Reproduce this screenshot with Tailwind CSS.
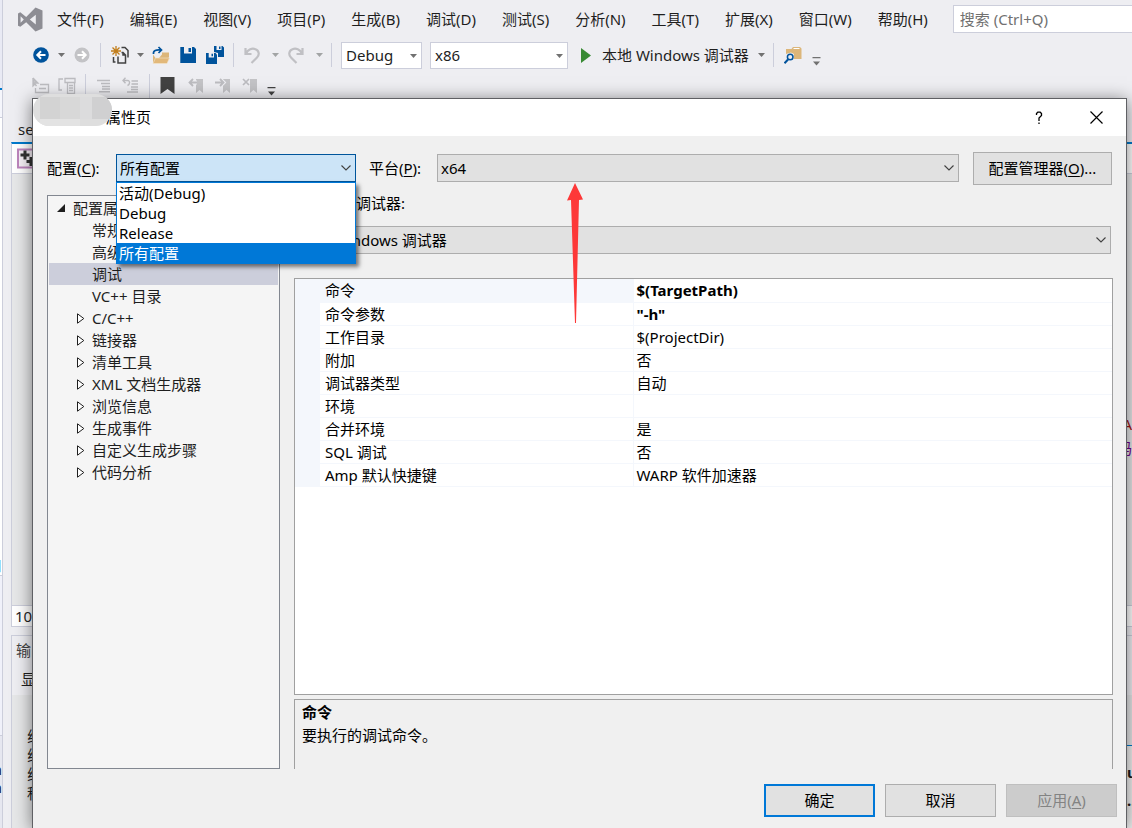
<!DOCTYPE html>
<html lang="zh-CN">
<head>
<meta charset="utf-8">
<title>属性页</title>
<script src="https://cdn.jsdelivr.net/npm/@tailwindcss/browser@4"></script>
</head>
<body class="relative flex h-screen overflow-hidden bg-[#eeeef2] font-['Noto_Sans','Noto_Sans_CJK_SC',sans-serif] text-[15px] leading-5 text-[#1e1e1e]">

<svg class="hidden" aria-hidden="true">
  <symbol id="caret" viewBox="0 0 7 4"><path d="M0 0h7L3.5 4z" fill="currentColor"/></symbol>
  <symbol id="chev" viewBox="0 0 10 6"><path d="M.5.5 5 5 9.500.5" fill="none" stroke="currentColor" stroke-width="1.1"/></symbol>
  <symbol id="more" viewBox="0 0 9 9"><path d="M.5 0h8v1.200h-8zM1 4.500h7L4.500 8.500z" fill="currentColor"/></symbol>
  <symbol id="closed" viewBox="0 0 8 11"><path d="M.5.8v9.400L6.800 5.500z" fill="#fff" stroke="#1e1e1e"/></symbol>
  <pattern id="dots" width="4" height="4" patternUnits="userSpaceOnUse"><path d="M0 0h1v1H0zM2 2h1v1H2z" fill="#999"/></pattern>
  <symbol id="mark" viewBox="0 0 16 16"><path d="M8 1h7v14l-3.500-3L8 15z" fill="#c3c3c6"/></symbol>
</svg>

<!-- Edge of the window behind -->
<div class="flex w-[3px] shrink-0 flex-col overflow-hidden border-r border-[#cccedb] bg-[#f5f6fc]">
  <div class="h-[88px] shrink-0 bg-[#e9eaf4]"></div>
  <div class="h-[2px] shrink-0 bg-[#007acc]"></div>
  <div class="h-[28px] shrink-0 border-b border-[#cccedb] bg-[#f5f6fc]"></div>
  <div class="flex h-[457px] shrink-0 flex-col justify-end bg-white"><span class="flex justify-end text-blue-600">口</span></div>
  <div class="h-[161px] shrink-0 border-y border-[#cccedb] bg-[#f0f1fa]"></div>
  <div class="flex grow flex-col items-end bg-[#e6e7f0] pt-6 leading-[18px]"><span>m</span><span>m</span></div>
</div>

<main class="flex min-w-0 grow flex-col">
  <nav class="flex h-[38px] shrink-0 items-center pl-[15px]" aria-label="主菜单">
    <svg class="mr-[14px] size-[25px] shrink-0" viewBox="0 0 25 25" fill="#8d8d94"><path fill-rule="evenodd" d="M0 6.500 2.300 5.300 8.200 10 17.500.5 24.500 3.500v18L17.500 24.500 8.200 15.200 2.300 19.800 0 18.700zM2.600 9.300v6.500L5.800 12.600zM11.800 12.600 17.800 17.400V7.800z"/></svg>
    <div class="flex shrink-0 gap-[26px]">
      <button>文件(F)</button><button>编辑(E)</button><button>视图(V)</button><button>项目(P)</button><button>生成(B)</button><button>调试(D)</button><button>测试(S)</button><button>分析(N)</button><button>工具(T)</button><button>扩展(X)</button><button>窗口(W)</button><button>帮助(H)</button>
    </div>
    <input type="search" aria-label="搜索" placeholder="搜索 (Ctrl+Q)" class="ml-[25px] h-7 min-w-0 grow border border-r-0 border-[#cccedb] bg-white pl-[6px] outline-none placeholder:text-[#717171]">
  </nav>

  <div class="flex h-[34px] shrink-0 items-center pl-[14px]" role="toolbar" aria-label="标准">
    <svg class="h-[22px] w-[7px]"><rect width="7" height="22" fill="url(#dots)"/></svg>
    <button class="ml-[9px]" aria-label="后退"><svg class="size-4" viewBox="0 0 16 16"><circle cx="8" cy="8" r="7.800" fill="#00539c"/><path d="M12.500 8H4.500M8 4.200 4.300 8 8 11.800" fill="none" stroke="#fff" stroke-width="2"/></svg></button>
    <button class="ml-[9px]" aria-label="后退列表"><svg class="h-1 w-[7px] text-[#717171]"><use href="#caret"/></svg></button>
    <button class="ml-[9px]" aria-label="前进"><svg class="size-4" viewBox="0 0 16 16"><circle cx="8" cy="8" r="7.500" fill="#c3c3c6"/><path d="M3.500 8h8M8 4.200 11.700 8 8 11.800" fill="none" stroke="#fff" stroke-width="2"/></svg></button>
    <span class="ml-[10px] h-6 w-px bg-[#cccedb]"></span>
    <button class="ml-[10px]" aria-label="新建项目"><svg class="size-[18px]" viewBox="0 0 18 18" fill="none"><path d="M5 0v10M0 5h10M1.500 1.500l7 7M8.500 1.500l-7 7" stroke="#c27d1a" stroke-width="1.300"/><path d="M10.500 1.500h3.500l3 3v7M2.500 11v5h2" stroke="#424242" stroke-width="1.500"/><path d="M7 10.500V17h7.500V9l-2.500-2.500h-1.500M12 6.500V9h2.500" stroke="#424242" stroke-width="1.500"/></svg></button>
    <button class="ml-[8px]" aria-label="新建列表"><svg class="h-1 w-[7px] text-[#717171]"><use href="#caret"/></svg></button>
    <button class="ml-[8px]" aria-label="打开文件"><svg class="size-[18px]" viewBox="0 0 18 18"><path d="M1 8.500V17h13.500L17 11V6.500h-7V8.500L7 12H3.500z" fill="#dcb67a"/><path d="M3.500 12h14L15 17.500H1z" fill="#e2b87a" stroke="#f3e5cf" stroke-width=".6"/><path d="M1.500 8C1 4.500 4 3.500 9 4M6.500 1 9.500 4l-3 3" fill="none" stroke="#00539c" stroke-width="1.700"/></svg></button>
    <button class="ml-[10px]" aria-label="保存"><svg class="size-4" viewBox="0 0 16 16"><path d="M.3 0h13.700l2 2v14H.3z" fill="#00539c"/><path d="M4 0h8v6.500H4z" fill="#eeeef2"/><path d="M8.500 1H11v4H8.500z" fill="#00539c"/></svg></button>
    <button class="ml-[10px]" aria-label="全部保存"><svg class="size-[18px]" viewBox="0 0 18 18"><path d="M8 0h8.500L18 1.500V11H12V7L8 6z" fill="#00539c"/><path d="M10.500 0h5v4h-5z" fill="#eeeef2"/><path d="M13 .5h1.500v2.500H13z" fill="#00539c"/><path d="M0 7h9.500L11 8.500V18H0z" fill="#00539c"/><path d="M2.700 7h5.300v4.500H2.700z" fill="#eeeef2"/><path d="M5.500 7.700H7v2.600H5.500z" fill="#00539c"/></svg></button>
    <span class="ml-[9px] h-6 w-px bg-[#cccedb]"></span>
    <button class="ml-[10px]" aria-label="撤消"><svg class="size-[17px]" viewBox="0 0 17 17"><path d="M1.500 1v6h6M2 6.500C4 2.500 8 .8 11.500 2.200c4 1.600 4 5.800 1.500 8.300L7.500 16" fill="none" stroke="#c0c0c4" stroke-width="2.200"/></svg></button>
    <button class="ml-[11px]" aria-label="撤消列表"><svg class="h-1 w-[7px] text-[#a2a4a5]"><use href="#caret"/></svg></button>
    <button class="ml-[8px]" aria-label="恢复"><svg class="size-[17px]" viewBox="0 0 17 17"><path d="M15.500 1v6h-6M15 6.500C13 2.500 9 .8 5.500 2.200c-4 1.600-4 5.800-1.500 8.300L9.500 16" fill="none" stroke="#c0c0c4" stroke-width="2.200"/></svg></button>
    <button class="ml-[12px]" aria-label="恢复列表"><svg class="h-1 w-[7px] text-[#a2a4a5]"><use href="#caret"/></svg></button>
    <span class="ml-[8px] h-6 w-px bg-[#cccedb]"></span>
    <div class="relative ml-[9px]"><select aria-label="解决方案配置" class="h-[27px] w-[81px] appearance-none border border-[#cccedb] bg-white pl-1"><option>Debug</option></select><svg class="pointer-events-none absolute top-3 right-[5px] h-1 w-[7px] text-[#717171]"><use href="#caret"/></svg></div>
    <div class="relative ml-2"><select aria-label="解决方案平台" class="h-[27px] w-[138px] appearance-none border border-[#cccedb] bg-white pl-1"><option>x86</option></select><svg class="pointer-events-none absolute top-3 right-[5px] h-1 w-[7px] text-[#717171]"><use href="#caret"/></svg></div>
    <button class="ml-[13px] flex shrink-0 items-center"><svg class="mr-[11px] h-[15px] w-[10px]" viewBox="0 0 10 15"><path d="M0 0v15l10-7.500z" fill="#388a34"/></svg>本地 Windows 调试器<svg class="ml-[9px] h-1 w-[7px] text-[#717171]"><use href="#caret"/></svg></button>
    <span class="ml-[8px] h-6 w-px bg-[#cccedb]"></span>
    <button class="ml-[10px]" aria-label="在文件中查找"><svg class="size-[18px]" viewBox="0 0 18 18"><path d="M2 3h5.500L9 1h7l1.500 1.500V13H10V8L7 6.500 2 8z" fill="#dcb67a"/><path d="M9.500 2.500h6" stroke="#fff"/><circle cx="6.200" cy="11" r="2.800" fill="#eeeef2" stroke="#00539c" stroke-width="1.500"/><path d="m4 13.500-3.500 3.800" stroke="#00539c" stroke-width="2"/></svg></button>
    <button class="mt-3 ml-[10px]" aria-label="工具栏选项"><svg class="size-[9px] text-[#717171]"><use href="#more"/></svg></button>
  </div>

  <div class="flex h-[27px] shrink-0 items-center pl-[14px]" role="toolbar" aria-label="文本编辑器">
    <svg class="h-[19px] w-[7px]"><rect width="7" height="19" fill="url(#dots)"/></svg>
    <button class="ml-[8px]" aria-label="成员列表"><svg class="size-[18px]" viewBox="0 0 18 18" fill="none" stroke="#bcbcc0" stroke-width="1.300"><path d="M1 1v8l2-2 1.500 2" fill="#bcbcc0"/><path d="M1 1l5 5H3" fill="#bcbcc0"/><path d="M8 7.500h8.500v8h-13V11M7 11.500h7"/></svg></button>
    <button class="ml-[8px]" aria-label="参数信息"><svg class="size-[18px]" viewBox="0 0 18 18" fill="none" stroke="#bcbcc0" stroke-width="1.300"><path d="M5 2H1v11h3M7 1.500h10v4H7zM9.500 5.500v11h7v-11M11 8.500h4M11 11h4M11 13.500h4"/></svg></button>
    <span class="ml-[9px] h-6 w-px bg-[#cccedb]"></span>
    <button class="ml-[11px]" aria-label="注释选中行"><svg class="size-[15px]" viewBox="0 0 15 15" fill="none" stroke="#bcbcc0" stroke-width="1.400"><path d="M0 2.500h13M4 5.500h9M5 8.500h8M5 11h8M2 13.700h11"/></svg></button>
    <button class="ml-[10px]" aria-label="取消注释选中行"><svg class="size-[17px]" viewBox="0 0 17 17" fill="none" stroke="#bcbcc0" stroke-width="1.400"><path d="M3.500.8 1 3.500l2.500 2.700M1 3.500h4.500c3 0 2.500 4 0 5M9.500 4H16M9.500 7H16M9 10h7M9 12.500h7M5 15h11"/></svg></button>
    <span class="ml-[10px] h-6 w-px bg-[#cccedb]"></span>
    <button class="ml-[10px]" aria-label="切换书签"><svg class="h-[17px] w-[15px]" viewBox="0 0 15 17"><path d="M.5 0h14v17l-7-5-7 5z" fill="#424242"/></svg></button>
    <button class="ml-[13px]" aria-label="上一书签"><svg class="size-4" viewBox="0 0 16 16"><use href="#mark"/><path d="M9 4.500H2M5 1 1.500 4.500 5 8" fill="none" stroke="#eeeef2" stroke-width="4"/><path d="M9 4.500H2M5 1 1.500 4.500 5 8" fill="none" stroke="#bcbcc0" stroke-width="1.800"/></svg></button>
    <button class="ml-[11px]" aria-label="下一书签"><svg class="size-4" viewBox="0 0 16 16"><use href="#mark"/><path d="M0 4.500h7M5 1l3.500 3.500L5 8" fill="none" stroke="#eeeef2" stroke-width="4"/><path d="M0 4.500h7M5 1l3.500 3.500L5 8" fill="none" stroke="#bcbcc0" stroke-width="1.800"/></svg></button>
    <button class="ml-[11px]" aria-label="清除书签"><svg class="size-4" viewBox="0 0 16 16"><use href="#mark"/><path d="m1 1 6 6M7 1 1 7" stroke="#bcbcc0" stroke-width="1.700"/></svg></button>
    <button class="mt-3 ml-[9px]" aria-label="工具栏选项"><svg class="size-[9px] text-[#424242]"><use href="#more"/></svg></button>
  </div>

  <section class="ml-2 flex min-h-0 grow flex-col pt-5" aria-label="编辑器">
    <div class="h-[23px] shrink-0 pl-[7px]">server.cpp</div>
    <div class="flex h-[32px] shrink-0 items-center border-t-2 border-b border-l border-t-[#007acc] border-b-[#cccedb] border-l-[#cccedb] bg-white pl-[5px]">
      <svg class="size-[22px]" viewBox="0 0 22 22"><path d="M1 1.500h20v18H1z" fill="#f6f0f6" stroke="#bd85bd" stroke-width="2"/><path d="M8 2.500v9M3.500 7h9M14 9v9M9.500 13.500h9" stroke="#333" stroke-width="3"/></svg>
    </div>
    <div class="flex h-[431px] shrink-0 flex-col items-end justify-center overflow-hidden border-l border-[#cccedb] bg-[#e6e7e8] pt-[92px] leading-6">
      <span class="text-[#a31515]">TA</span><span class="text-[#6f008a]">吗</span>
    </div>
    <div class="h-[22px] shrink-0 border border-r-0 border-[#cccedb] bg-white pl-[3px]">100 %</div>
    <div class="mt-2 flex h-[60px] shrink-0 flex-col gap-[9px] border-t border-l border-[#cccedb] pt-1 pl-1">
      <span class="text-[#444]">输出</span><span class="pl-[5px]">显示</span>
    </div>
    <div class="flex min-h-0 grow justify-between overflow-hidden border-l border-[#cccedb] bg-[#e6e7e8]">
      <div class="pt-8 pl-[15px] leading-[19px]">线程<br>线程<br>线程<br>程序</div>
      <div class="mt-[50px] w-[5px] border-t border-[#007acc] bg-[#f0f0f0] pt-3 leading-7 font-bold">u<br>..</div>
    </div>
  </section>
</main>

<!-- Property pages dialog -->
<div role="dialog" aria-labelledby="dialog-title" class="absolute top-[98px] right-[5px] bottom-0 left-8 flex flex-col border border-b-0 border-[#5f6064] bg-[#f0f0f0] text-black shadow-[0_2px_16px_rgba(0,0,0,0.5)]">
  <header class="flex h-[37px] shrink-0 items-center bg-white pr-[23px]">
    <h1 id="dialog-title" class="pb-[2px] pl-[73px]">属性页</h1>
    <button class="ml-auto" aria-label="帮助"><svg class="h-[14px] w-2" viewBox="0 0 8 14"><path d="M1.500 4V2.500L2.800 1.200h2.400l1.300 1.300v2L4 7v3M4 11.500V13" fill="none" stroke="#000" stroke-width="1.300"/></svg></button>
    <button class="ml-[47px]" aria-label="关闭"><svg class="size-[13px]" viewBox="0 0 13 13"><path d="m.5.5 12 12M12.500.5l-12 12" stroke="#000" stroke-width="1.200"/></svg></button>
  </header>

  <div class="mt-4 flex h-8 shrink-0 items-center px-[14px]">
    <label for="config" class="w-[69px] shrink-0">配置(<u class="underline-offset-2">C</u>):</label>
    <div class="relative w-[240px] shrink-0">
      <select id="config" class="block h-7 w-full appearance-none border border-[#00559b] bg-[#cce4f7] pl-[3px]"><option>所有配置</option><option>活动(Debug)</option><option>Debug</option><option>Release</option></select>
      <svg class="pointer-events-none absolute top-[11px] right-[5px] h-[6px] w-[10px] text-[#404040]"><use href="#chev"/></svg>
      <ul role="listbox" aria-label="配置" class="absolute top-7 left-0 z-10 w-full border border-[#0078d7] bg-white shadow-[3px_3px_4px_rgba(0,0,0,0.5)]">
        <li role="option" class="h-5 pl-[2px]">活动(Debug)</li>
        <li role="option" class="h-5 pl-[2px]">Debug</li>
        <li role="option" class="h-5 pl-[2px]">Release</li>
        <li role="option" aria-selected="true" class="h-5 bg-[#0078d7] pl-[2px] text-white">所有配置</li>
      </ul>
    </div>
    <label for="platform" class="ml-[13px] w-[68px] shrink-0">平台(<u class="underline-offset-2">P</u>):</label>
    <div class="relative grow">
      <select id="platform" class="block h-7 w-full appearance-none border border-[#adadad] bg-[#e1e1e1] pl-[3px]"><option>x64</option></select>
      <svg class="pointer-events-none absolute top-[11px] right-[5px] h-[6px] w-[10px] text-[#404040]"><use href="#chev"/></svg>
    </div>
    <button class="ml-[14px] h-[33px] w-[139px] shrink-0 self-start border border-[#adadad] bg-[#e1e1e1] pb-[2px]">配置管理器(<u class="underline-offset-2">O</u>)...</button>
  </div>

  <div class="mt-[11px] flex h-[574px] shrink-0 pr-[13px] pl-[14px]">
    <ul role="tree" aria-label="配置属性" class="w-[233px] shrink-0 border border-[#828790] bg-[#f5f5f5] p-px leading-[22px] text-[#1e1e1e]">
      <li role="treeitem" aria-expanded="true">
        <div class="flex h-[22px] items-center pl-2"><svg class="mr-2 size-2" viewBox="0 0 8 8"><path d="M8 0v8H0z" fill="#1e1e1e"/></svg>配置属性</div>
        <ul role="group">
          <li role="treeitem" class="h-[22px] pl-[43px]">常规</li>
          <li role="treeitem" class="h-[22px] pl-[43px]">高级</li>
          <li role="treeitem" aria-selected="true" class="h-[22px] bg-[#cccedb] pl-[43px]">调试</li>
          <li role="treeitem" class="h-[22px] pl-[43px]">VC++ 目录</li>
          <li role="treeitem" class="flex h-[22px] items-center pl-7"><svg class="mr-[7px] h-[11px] w-2"><use href="#closed"/></svg>C/C++</li>
          <li role="treeitem" class="flex h-[22px] items-center pl-7"><svg class="mr-[7px] h-[11px] w-2"><use href="#closed"/></svg>链接器</li>
          <li role="treeitem" class="flex h-[22px] items-center pl-7"><svg class="mr-[7px] h-[11px] w-2"><use href="#closed"/></svg>清单工具</li>
          <li role="treeitem" class="flex h-[22px] items-center pl-7"><svg class="mr-[7px] h-[11px] w-2"><use href="#closed"/></svg>XML 文档生成器</li>
          <li role="treeitem" class="flex h-[22px] items-center pl-7"><svg class="mr-[7px] h-[11px] w-2"><use href="#closed"/></svg>浏览信息</li>
          <li role="treeitem" class="flex h-[22px] items-center pl-7"><svg class="mr-[7px] h-[11px] w-2"><use href="#closed"/></svg>生成事件</li>
          <li role="treeitem" class="flex h-[22px] items-center pl-7"><svg class="mr-[7px] h-[11px] w-2"><use href="#closed"/></svg>自定义生成步骤</li>
          <li role="treeitem" class="flex h-[22px] items-center pl-7"><svg class="mr-[7px] h-[11px] w-2"><use href="#closed"/></svg>代码分析</li>
        </ul>
      </li>
    </ul>

    <div class="ml-[14px] flex min-w-0 grow flex-col">
      <label for="debugger" class="block h-[31px] pl-[2px] leading-4">要启动的调试器:</label>
      <div class="relative mr-[2px]">
        <select id="debugger" class="block h-7 w-full appearance-none border border-[#adadad] bg-[#e1e1e1] pl-[5px]"><option>本地 Windows 调试器</option></select>
        <svg class="pointer-events-none absolute top-[11px] right-[5px] h-[6px] w-[10px] text-[#404040]"><use href="#chev"/></svg>
      </div>
      <div class="mt-6 grow border border-[#a0a0a0] bg-white">
        <table class="w-full table-fixed border-collapse">
          <colgroup><col class="w-[25px]"><col class="w-[313px]"><col></colgroup>
          <tbody class="[&_td]:h-[23px] [&_td]:border-b [&_td]:border-[#f4f7fc] [&_td]:py-0 [&_td]:pl-[3px] [&_th]:border-r [&_th]:border-b [&_th]:border-[#f4f7fc] [&_th]:py-0 [&_th]:pl-[5px] [&_th]:text-left [&_th]:font-normal">
            <tr><td class="bg-[#f4f7fc]"></td><th scope="row" class="bg-[#f4f7fc]">命令</th><td class="font-bold">$(TargetPath)</td></tr>
            <tr><td class="bg-[#f4f7fc]"></td><th scope="row">命令参数</th><td class="font-bold">"-h"</td></tr>
            <tr><td class="bg-[#f4f7fc]"></td><th scope="row">工作目录</th><td>$(ProjectDir)</td></tr>
            <tr><td class="bg-[#f4f7fc]"></td><th scope="row">附加</th><td>否</td></tr>
            <tr><td class="bg-[#f4f7fc]"></td><th scope="row">调试器类型</th><td>自动</td></tr>
            <tr><td class="bg-[#f4f7fc]"></td><th scope="row">环境</th><td></td></tr>
            <tr><td class="bg-[#f4f7fc]"></td><th scope="row">合并环境</th><td>是</td></tr>
            <tr><td class="bg-[#f4f7fc]"></td><th scope="row">SQL 调试</th><td>否</td></tr>
            <tr><td class="bg-[#f4f7fc]"></td><th scope="row">Amp 默认快捷键</th><td>WARP 软件加速器</td></tr>
          </tbody>
        </table>
      </div>
      <div class="mt-1 h-[70px] shrink-0 border border-b-0 border-[#a0a0a0] pt-px pl-[7px] leading-[23px]">
        <h2 class="font-bold">命令</h2>
        <p>要执行的调试命令。</p>
      </div>
    </div>
  </div>

  <footer class="mt-[15px] flex shrink-0 justify-end gap-[10px] pr-[9px]">
    <button class="h-[33px] w-[111px] border-2 border-[#0078d7] bg-[#e1e1e1] pb-[2px]">确定</button>
    <button class="h-[33px] w-[111px] border border-[#adadad] bg-[#e1e1e1] pb-[2px]">取消</button>
    <button disabled class="h-[33px] w-[111px] border border-[#bfbfbf] bg-[#cccccc] pb-[2px] text-[#838383]">应用(<u class="underline-offset-2">A</u>)</button>
  </footer>

  <!-- Redacted project name -->
  <svg class="absolute top-[-5px] left-0 h-8 w-[79px]" viewBox="0 0 79 32" aria-hidden="true">
    <clipPath id="blob"><rect width="79" height="32" rx="16"/></clipPath>
    <g clip-path="url(#blob)"><path fill="#dedede" d="M0 0h79v32H0z"/><path fill="#d3d3d3" d="M7 3h20v22H7z"/><path fill="#d8d8d8" d="M27 3h20v22H27z"/><path fill="#dcdcdd" d="M47 3h12v22H47z"/><path fill="#d0d0d1" d="M59 3h20v22H59z"/><path fill="#e3e3e3" d="M7 25h40v7H7z"/></g>
  </svg>
</div>

<!-- Annotation arrow -->
<svg class="absolute top-[183px] left-[567px] h-[140px] w-4" viewBox="0 0 16 140" aria-hidden="true"><path d="M8 0 16 16.500l-4 .5L9 140H8L4 17l-4 .5z" fill="#fd3838"/></svg>
</body>
</html>
